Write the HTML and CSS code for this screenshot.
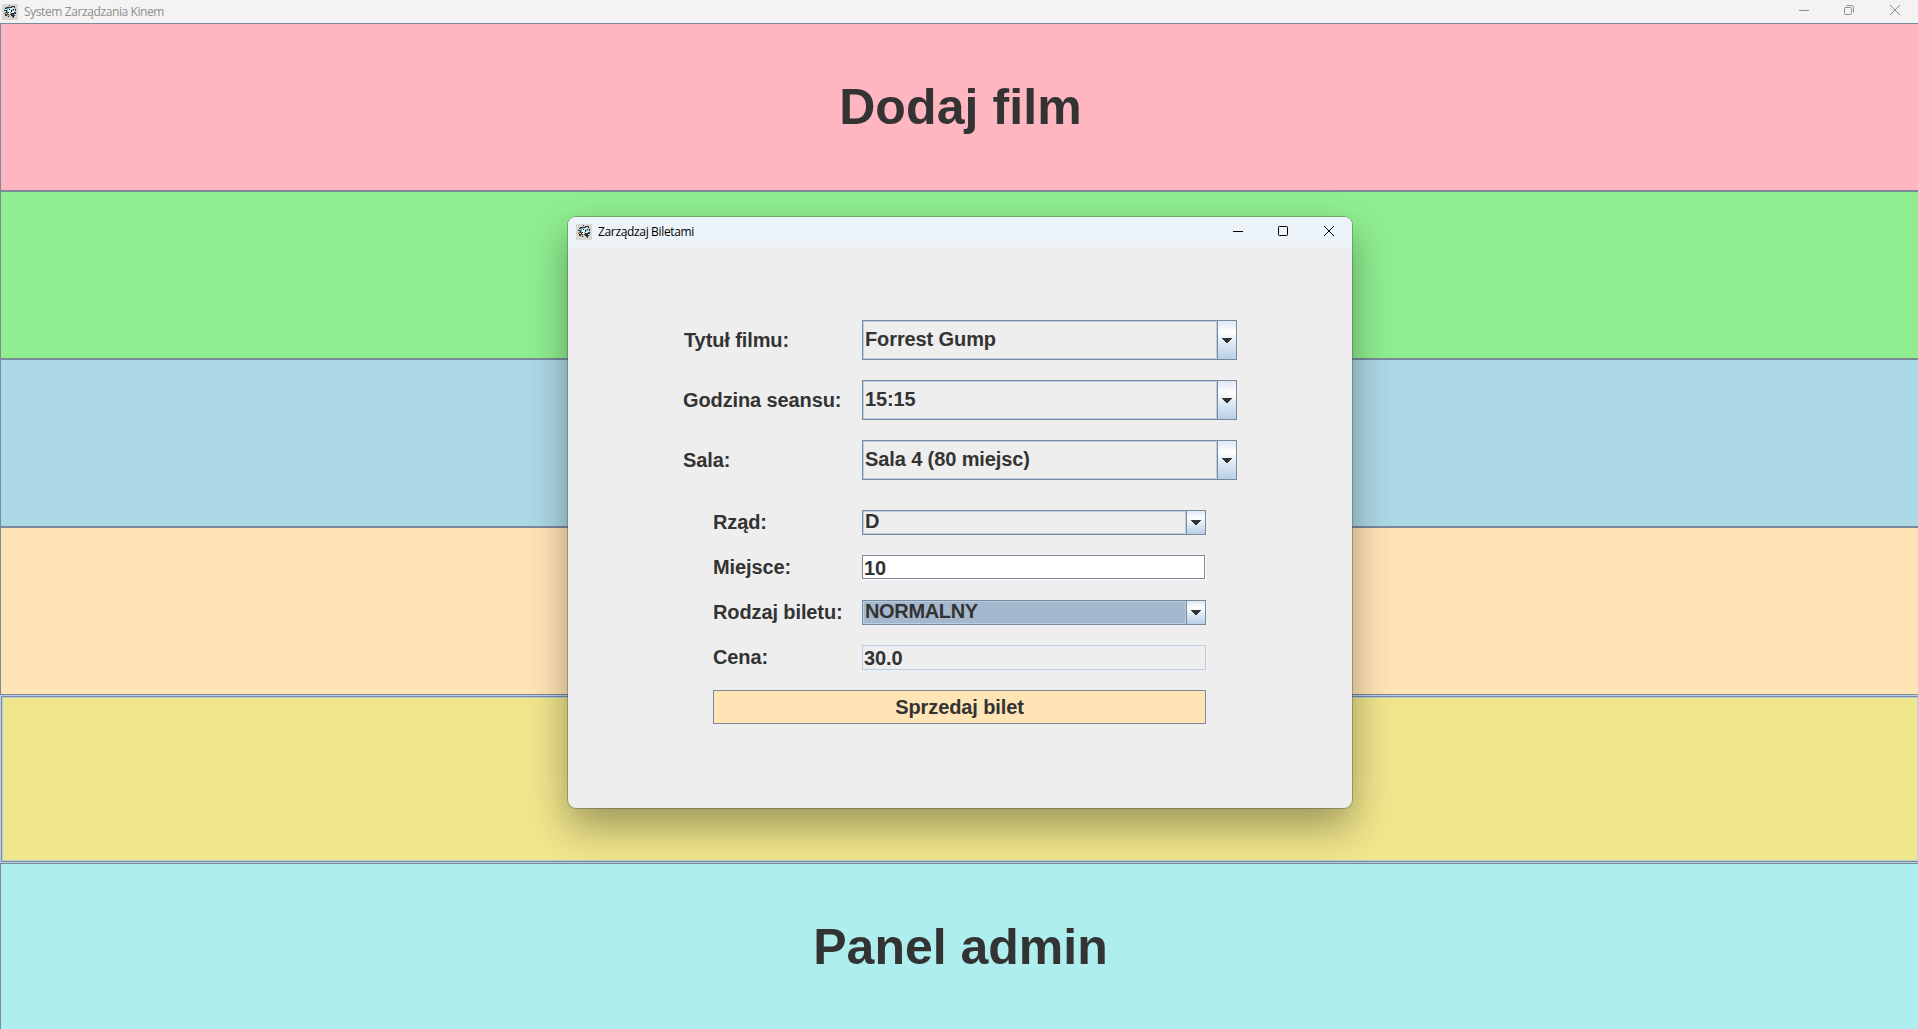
FILE: index.html
```html
<!DOCTYPE html>
<html lang="pl">
<head>
<meta charset="utf-8">
<title>System Zarządzania Kinem</title>
<link rel="stylesheet" href="styles.css">
</head>
<body>
<svg class="defs" width="0" height="0">
  <symbol id="app" viewBox="0 0 16 16" shape-rendering="crispEdges">
    <path fill="#d9d7d3" d="M0 0h16v16H0z"/>
    <path fill="#b3b8b8" d="M3 3h2v1H3zM12 4h2v1h-2zM5 11h3v2H5zM12 11h2v1h-2zM6 2h1v1H6z"/>
    <path fill="#2b373c" d="M7 1h1v1H7zM4 3h3v1H4zM9 2h4v1H9zM7 3h3v1H7zM3 4h2v1H3zM12 3h1v1h-1zM13 5h1v2h-1zM2 6h3v1H2zM4 7h1v2H4zM12 8h2v2h-2zM3 10h4v1H3zM8 10h4v1H8zM9 9h4v1H9zM5 9h1v1H5zM3 11h2v1H3zM9 11h4v1H9zM10 12h2v1h-2zM11 13h1v1h-1zM6 12h1v1H6z"/>
    <path fill="#f5fafa" d="M6 5h3v4H6zM9 4h2v1H9zM10 7h2v2h-2zM7 9h1v1H7z"/>
    <path fill="#111a1d" d="M7 5h1v1H7zM9 6h1v2H9zM6 8h1v1H6zM11 5h1v1h-1z"/>
    <path fill="#38c5e2" d="M5 4h2v1H5zM5 5h1v3H5zM10 5h1v2h-1zM11 6h1v1h-1zM8 8h1v1H8z"/>
    <path fill="#dc4a3d" d="M3 8h1v1H3zM5 8h1v1H5zM5 10h1v1H5z"/>
    <path fill="#e3b64b" d="M2 5h1v1H2zM2 8h1v1H2z"/>
    <path fill="#42a765" d="M2 9h2v1H2z"/>
  </symbol>
  <symbol id="arrow" viewBox="0 0 10 5" shape-rendering="crispEdges">
    <path fill="#333" d="M0 0h10v1H0zM1 1h8v1H1zM2 2h6v1H2zM3 3h4v1H3zM4 4h2v1H4z"/>
  </symbol>
</svg>
<div class="main-window">
  <header class="titlebar">
    <svg class="app-icon"><use href="#app"/></svg>
    <span class="title">System Zarządzania Kinem</span>
    <div class="controls">
      <svg viewBox="0 0 12 12"><path d="M2 6.5h10"/></svg>
      <svg viewBox="0 0 12 12"><rect x="1.5" y="3.5" width="7" height="7" rx="1"/><path d="M3.5 1.5h5q2 0 2 2v5"/></svg>
      <svg viewBox="0 0 12 12"><path d="M1 1l10 10M11 1l-10 10"/></svg>
    </div>
  </header>
  <main class="menu">
    <button class="band pink">Dodaj film</button>
    <button class="band green"></button>
    <button class="band blue"></button>
    <button class="band peach"></button>
    <button class="band khaki focused"></button>
    <button class="band cyan">Panel admin</button>
  </main>
</div>
<section class="dialog">
  <header class="titlebar">
    <svg class="app-icon"><use href="#app"/></svg>
    <span class="title">Zarządzaj Biletami</span>
    <div class="controls">
      <svg viewBox="0 0 12 12"><path d="M2 6.5h10"/></svg>
      <svg viewBox="0 0 12 12"><rect x="1.5" y="1.5" width="9" height="9" rx="0.8"/></svg>
      <svg viewBox="0 0 12 12"><path d="M1 1l10 10M11 1l-10 10"/></svg>
    </div>
  </header>
  <div class="form">
    <div class="row big"><label class="first">Tytuł filmu:</label><div class="combo"><span>Forrest Gump</span><i><svg><use href="#arrow"/></svg></i></div></div>
    <div class="row big"><label>Godzina seansu:</label><div class="combo"><span>15:15</span><i><svg><use href="#arrow"/></svg></i></div></div>
    <div class="row big"><label>Sala:</label><div class="combo"><span>Sala 4 (80 miejsc)</span><i><svg><use href="#arrow"/></svg></i></div></div>
    <div class="details">
      <div class="row"><label>Rząd:</label><div class="combo"><span>D</span><i><svg><use href="#arrow"/></svg></i></div></div>
      <div class="row"><label>Miejsce:</label><div class="field"><span>10</span></div></div>
      <div class="row"><label>Rodzaj biletu:</label><div class="combo selected"><span>NORMALNY</span><i><svg><use href="#arrow"/></svg></i></div></div>
      <div class="row"><label>Cena:</label><div class="field readonly"><span>30.0</span></div></div>
      <button class="sell">Sprzedaj bilet</button>
    </div>
  </div>
</section>
</body>
</html>
```
FILE: styles.css
```css
* { box-sizing: border-box; }
body {
  margin: 0;
  height: 1029px;
  overflow: hidden;
  position: relative;
  font: bold 20px "Liberation Sans", Arial, sans-serif;
  color: #333;
}
.defs { position: absolute; }
svg { display: block; }
button { font: inherit; color: inherit; padding: 0; border-radius: 0; }

.main-window { width: 1920px; }
.titlebar {
  display: flex;
  align-items: center;
  font: 12px "Open Sans", "Noto Sans", sans-serif;
}
.app-icon { width: 16px; height: 16px; }
.main-window .titlebar {
  height: 23px;
  padding: 0 19px 0 2px;
  background: #f3f3f3;
  color: #8d8d8d;
}
.title { margin-left: 6px; line-height: 16px; letter-spacing: -0.4px; }
.dialog .title { letter-spacing: -0.34px; }
.controls { display: flex; gap: 34px; margin-left: auto; }
.controls svg { width: 12px; height: 12px; fill: none; stroke: currentColor; }
.main-window .controls { margin-bottom: 3px; }
.dialog .controls { margin-bottom: 2px; }
.menu { display: flex; flex-direction: column; }
.band {
  height: 168px;
  border: 1px solid #7a8a99;
  font-size: 50px;
}
.pink { background: #ffb6c1; padding-left: 1px; letter-spacing: 0.1px; }
.green { background: #90ee90; }
.blue { background: #add8e6; }
.peach { background: #ffe4b5; }
.khaki { background: #f0e68c; }
.cyan { background: #afeeee; padding-left: 1px; }
.focused {
  border-color: #b8cfe5;
  box-shadow: inset 0 0 0 1px #7a8a99, inset 0 0 0 2px #b8cfe5;
}

.dialog {
  position: absolute;
  left: 568px;
  top: 217px;
  width: 784px;
  height: 591px;
  border-radius: 8px;
  background: #eee;
  box-shadow: 0 0 0 1px rgba(70, 90, 70, 0.4), 0 18px 40px rgba(0, 0, 0, 0.36);
}
.dialog .titlebar {
  height: 30px;
  padding: 0 17px 0 8px;
  border-radius: 8px 8px 0 0;
  background: #edf4f9;
  color: #000;
}
.form {
  display: flex;
  flex-direction: column;
  gap: 20px;
  padding: 73px 115px 0;
  letter-spacing: -0.11px;
}
.row { display: grid; grid-template: 25px / 149px 344px; }
.row.big { grid-template: 40px / 179px 375px; }
.row label { align-self: center; line-height: 23px; white-space: nowrap; }
.row .first { padding-left: 1px; }
.details { display: flex; flex-direction: column; gap: 20px; padding: 10px 0 0 30px; }
.combo {
  display: flex;
  border: 1px solid #7a8a99;
  line-height: 19px;
}
.combo span {
  flex: 1;
  display: flex;
  align-items: center;
  padding: 0 0 2px 1px;
  border: 1px solid #b8cfe5;
}
.combo i {
  width: 19px;
  display: grid;
  place-content: center;
  border-left: 1px solid #7a8a99;
  background: linear-gradient(#dde8f3, #fff 30%, #dde8f3 60%, #b8cfe5);
}
.combo i svg { width: 10px; height: 5px; }
.selected span { background: #a3b8cc; letter-spacing: -0.35px; }
.field {
  border: 1px solid #7a8a99;
  box-shadow: 1px 1px #fff;
  width: 343px;
  height: 24px;
  padding-left: 1px;
  line-height: 24px;
  background: #fff;
}
.readonly { width: 344px; height: 25px; border-color: #b8cfe5; box-shadow: none; background: #eee; }
.sell {
  width: 493px;
  height: 34px;
  border: 1px solid #7a8a99;
  background: #ffe4b5;
  letter-spacing: -0.11px;
}
```
